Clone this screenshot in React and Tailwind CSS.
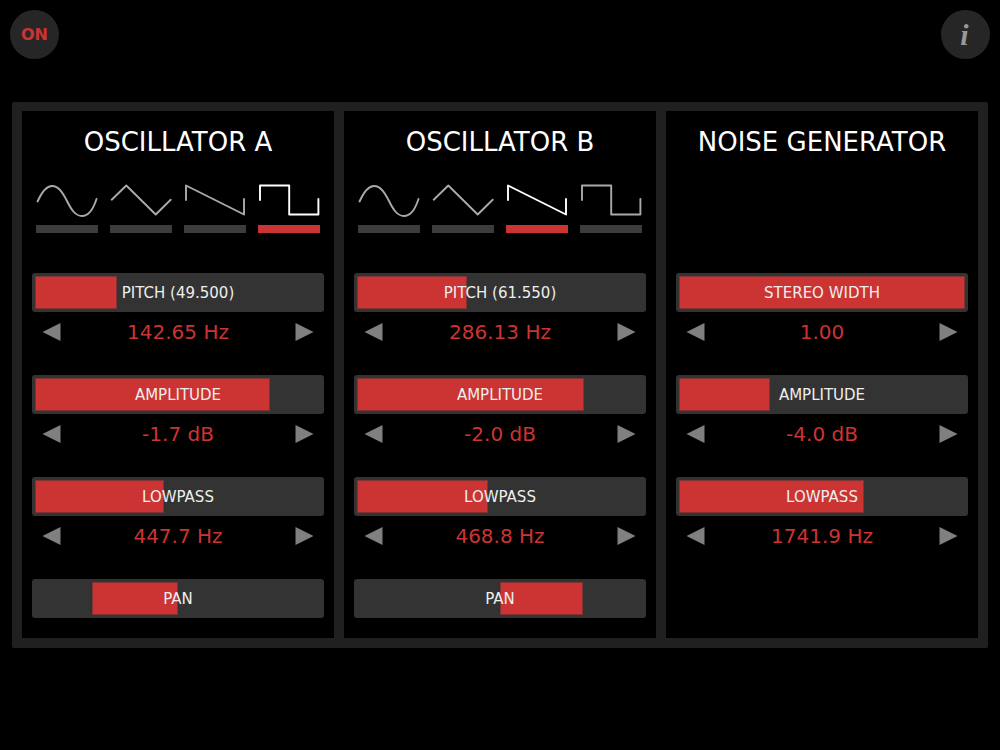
import { useState } from "react";

const WAVES = [
  { id: "sine", d: "M1.5 19.5C6 9.5 11 4 16 4C23 4 27 11.5 31 19C35 27 39 34 46 34C52 34 57 28 60.5 17" },
  { id: "triangle", d: "M1.7 17.7L16.3 3.5L45.7 32.5L60.7 17.7" },
  { id: "sawtooth", d: "M2 18V3.5L60 32.5V17" },
  { id: "square", d: "M2 18V3.5H31.2V32.5H60.4V17" },
];

// from / to are percentages of the track
const PANELS = [
  {
    id: "osc-a",
    title: "OSCILLATOR A",
    wave: "square",
    params: [
      { label: "PITCH (49.500)", value: "142.65 Hz", from: 0, to: 28.5 },
      { label: "AMPLITUDE", value: "-1.7 dB", from: 0, to: 82.2 },
      { label: "LOWPASS", value: "447.7 Hz", from: 0, to: 45 },
      { label: "PAN", from: 19.8, to: 50 },
    ],
  },
  {
    id: "osc-b",
    title: "OSCILLATOR B",
    wave: "sawtooth",
    params: [
      { label: "PITCH (61.550)", value: "286.13 Hz", from: 0, to: 38.4 },
      { label: "AMPLITUDE", value: "-2.0 dB", from: 0, to: 79.5 },
      { label: "LOWPASS", value: "468.8 Hz", from: 0, to: 45.8 },
      { label: "PAN", from: 50, to: 78.9 },
    ],
  },
  {
    id: "noise",
    title: "NOISE GENERATOR",
    params: [
      { label: "STEREO WIDTH", value: "1.00", from: 0, to: 100 },
      { label: "AMPLITUDE", value: "-4.0 dB", from: 0, to: 31.8 },
      { label: "LOWPASS", value: "1741.9 Hz", from: 0, to: 64.6 },
    ],
  },
];

function WavePicker({ name, initial }) {
  const [wave, setWave] = useState(initial);

  return (
    <div role="radiogroup" aria-label="Waveform" className="grid grid-cols-4 gap-3 px-1">
      {WAVES.map((w) => (
        <label key={w.id} className="group relative flex flex-col gap-[7px] cursor-pointer">
          <input
            type="radio"
            name={name}
            value={w.id}
            aria-label={w.id}
            checked={wave === w.id}
            onChange={() => setWave(w.id)}
            className="absolute inset-0 opacity-0"
          />
          <svg
            viewBox="0 0 62 36"
            fill="none"
            stroke="currentColor"
            strokeWidth="1.9"
            strokeLinecap="round"
            strokeLinejoin="round"
            className="w-full text-[#aaaaaa] group-has-checked:text-white"
          >
            <path d={w.d} />
          </svg>
          <span className="h-2 bg-[#3c3c3c] group-has-checked:bg-[#cc3333]" />
        </label>
      ))}
    </div>
  );
}

function Slider({ label, from, to }) {
  const start = from > 0 && to === 50 ? from : to;

  return (
    <label className="relative flex h-[39px] items-center justify-center rounded-[3px] bg-[#333333] text-[15px] leading-5 text-[#eeeeee]">
      <span className="absolute inset-[3px]">
        <span
          className="absolute inset-y-0 border border-[#803333] bg-[#cc3333]"
          style={{ left: `${from}%`, width: `${to - from}%` }}
        />
      </span>
      <span className="relative">{label}</span>
      <input
        type="range"
        min="0"
        max="100"
        step="0.1"
        defaultValue={start}
        className="absolute inset-0 h-full w-full cursor-pointer opacity-0"
      />
    </label>
  );
}

function Stepper({ label, value }) {
  return (
    <div className="flex h-10 items-center justify-between px-[10px] text-[20px] leading-6 text-[#cc3333]">
      <button type="button" aria-label={`Decrease ${label}`} className="text-[#808080]">
        <svg width="19" height="18" viewBox="0 0 19 18" fill="currentColor">
          <path d="M0.5 9L18.5 0V18Z" />
        </svg>
      </button>
      <output>{value}</output>
      <button type="button" aria-label={`Increase ${label}`} className="text-[#808080]">
        <svg width="19" height="18" viewBox="0 0 19 18" fill="currentColor">
          <path d="M18.5 9L0.5 0V18Z" />
        </svg>
      </button>
    </div>
  );
}

function Panel({ id, title, wave, params }) {
  return (
    <section className="bg-black px-[10px] pt-[13px] pb-5">
      <h2 className="text-center text-[26px] leading-9 text-white">{title}</h2>
      <div className="mt-[22px] h-[91px]">
        {wave && <WavePicker name={`${id}-wave`} initial={wave} />}
      </div>
      <div className="flex flex-col gap-[23px]">
        {params.map((p) => (
          <div key={p.label}>
            <Slider label={p.label} from={p.from} to={p.to} />
            {p.value && <Stepper label={p.label} value={p.value} />}
          </div>
        ))}
      </div>
    </section>
  );
}

export default function App() {
  const [on, setOn] = useState(true);

  return (
    <div className="min-h-screen bg-black font-['Verdana','DejaVu_Sans',sans-serif]">
      <header className="flex justify-between p-[10px]">
        <button
          type="button"
          onClick={() => setOn(!on)}
          className="size-[49px] rounded-full bg-[#262626] pt-px text-[16px] font-bold text-[#cc3333]"
        >
          {on ? "ON" : "OFF"}
        </button>
        <button
          type="button"
          aria-label="Info"
          className="size-[49px] rounded-full bg-[#262626] pr-[2px] font-['Liberation_Serif',serif] text-[30px] leading-none font-bold text-[#999999] italic"
        >
          i
        </button>
      </header>

      <main className="mx-3 mt-[33px] grid grid-cols-3 gap-[10px] rounded-[2px] bg-[#202020] px-[10px] pt-[9px] pb-[10px]">
        {PANELS.map((p) => (
          <Panel key={p.id} {...p} />
        ))}
      </main>
    </div>
  );
}
